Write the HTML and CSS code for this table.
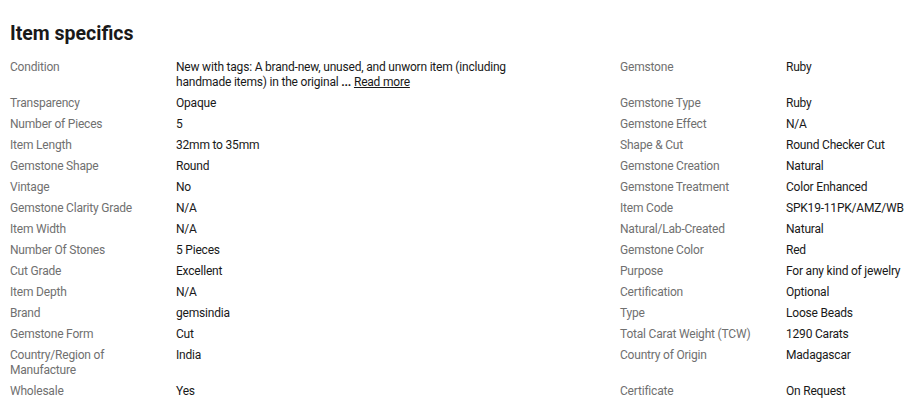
FILE: index.html
```html
<!DOCTYPE html>
<html lang="en">
<head>
<meta charset="utf-8">
<title>Item specifics</title>
<link rel="stylesheet" href="styles.css">
</head>
<body>
<section class="specs">
  <h2 class="specs-title">Item specifics</h2>
  <div class="specs-grid">
    <div class="label">Condition</div>
    <div class="value condition">New with tags: A brand-new, unused, and unworn item (including handmade items) in the original <a class="read-more" href="#"><span class="ellipsis">...</span> <span class="rm-text">Read more</span></a></div>
    <div class="label">Gemstone</div>
    <div class="value">Ruby</div>

    <div class="label">Transparency</div><div class="value">Opaque</div>
    <div class="label">Gemstone Type</div><div class="value">Ruby</div>

    <div class="label">Number of Pieces</div><div class="value">5</div>
    <div class="label">Gemstone Effect</div><div class="value">N/A</div>

    <div class="label">Item Length</div><div class="value">32mm to 35mm</div>
    <div class="label">Shape &amp; Cut</div><div class="value">Round Checker Cut</div>

    <div class="label">Gemstone Shape</div><div class="value">Round</div>
    <div class="label">Gemstone Creation</div><div class="value">Natural</div>

    <div class="label">Vintage</div><div class="value">No</div>
    <div class="label">Gemstone Treatment</div><div class="value">Color Enhanced</div>

    <div class="label">Gemstone Clarity Grade</div><div class="value">N/A</div>
    <div class="label">Item Code</div><div class="value">SPK19-11PK/AMZ/WB</div>

    <div class="label">Item Width</div><div class="value">N/A</div>
    <div class="label">Natural/Lab-Created</div><div class="value">Natural</div>

    <div class="label">Number Of Stones</div><div class="value">5 Pieces</div>
    <div class="label">Gemstone Color</div><div class="value">Red</div>

    <div class="label">Cut Grade</div><div class="value">Excellent</div>
    <div class="label">Purpose</div><div class="value">For any kind of jewelry</div>

    <div class="label">Item Depth</div><div class="value">N/A</div>
    <div class="label">Certification</div><div class="value">Optional</div>

    <div class="label">Brand</div><div class="value">gemsindia</div>
    <div class="label">Type</div><div class="value">Loose Beads</div>

    <div class="label">Gemstone Form</div><div class="value">Cut</div>
    <div class="label">Total Carat Weight (TCW)</div><div class="value">1290 Carats</div>

    <div class="label">Country/Region of Manufacture</div><div class="value">India</div>
    <div class="label">Country of Origin</div><div class="value">Madagascar</div>

    <div class="label">Wholesale</div><div class="value">Yes</div>
    <div class="label">Certificate</div><div class="value">On Request</div>
  </div>
</section>
</body>
</html>
```
FILE: styles.css
```css
html, body {
  margin: 0;
  padding: 0;
  background: #ffffff;
}

body {
  font-family: Roboto, "Liberation Sans", Arial, sans-serif;
  color: #191919;
}

.specs {
  padding: 0 0 0 10px;
}

.specs-title {
  margin: 22px 0 14px;
  font-size: 19.5px;
  line-height: 24px;
  font-weight: 700;
  color: #191919;
}

.specs-grid {
  display: grid;
  grid-template-columns: 166px 444px 166px auto;
  row-gap: 6px;
  font-size: 12px;
  line-height: 15px;
  letter-spacing: -0.2px;
}

.label {
  color: #707070;
  padding-right: 16px;
}

.value {
  color: #191919;
  white-space: nowrap;
}

.condition {
  max-width: 345px;
  white-space: normal;
}

.read-more {
  color: #191919;
  text-decoration: none;
  white-space: nowrap;
}

.ellipsis {
  font-weight: 700;
}

.rm-text {
  text-decoration: underline;
}
```
